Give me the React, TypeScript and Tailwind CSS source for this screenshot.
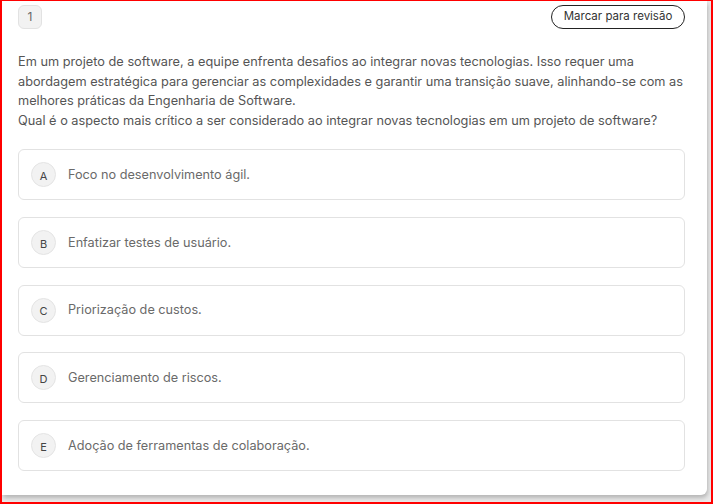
const options = [
  { letter: "A", text: "Foco no desenvolvimento ágil." },
  { letter: "B", text: "Enfatizar testes de usuário." },
  { letter: "C", text: "Priorização de custos." },
  { letter: "D", text: "Gerenciamento de riscos." },
  { letter: "E", text: "Adoção de ferramentas de colaboração." },
];

export default function App() {
  return (
    <div className="w-[713px] h-[504px] border-2 border-t border-[#ff0000] bg-[#e9e9e9] font-['Inter',sans-serif] overflow-hidden">
      <div className="w-[705px] h-[494px] bg-white rounded-br-md shadow-[1px_3px_4px_rgba(0,0,0,0.22)] px-4 pt-1">
        {/* Header */}
        <div className="flex items-center justify-between">
          <div className="w-6 h-6 flex items-center justify-center rounded-md bg-[#f2f2f2] border border-[#e2e2e2] text-[12px] text-[#666]">
            1
          </div>
          <button className="h-6 w-[134px] rounded-full border border-[#222] text-[11.5px] text-[#333] mr-[6px]">
            Marcar para revisão
          </button>
        </div>

        {/* Enunciado */}
        <p className="mt-[23px] text-[12.75px] leading-[19.5px] text-[#555]">
          Em um projeto de software, a equipe enfrenta desafios ao integrar novas tecnologias. Isso requer uma
          <br />
          abordagem estratégica para gerenciar as complexidades e garantir uma transição suave, alinhando-se com as
          <br />
          melhores práticas da Engenharia de Software.
          <br />
          Qual é o aspecto mais crítico a ser considerado ao integrar novas tecnologias em um projeto de software?
        </p>

        {/* Alternativas */}
        <div className="mt-[19px] flex flex-col gap-[16.75px] pr-[6px]">
          {options.map((o) => (
            <div
              key={o.letter}
              className="h-[51px] flex items-center gap-[12px] px-3 rounded-md border border-[#e2e2e2] bg-white"
            >
              <span className="w-[25px] h-[25px] flex items-center justify-center rounded-full bg-[#f2f2f2] border border-[#e4e4e4] text-[11px] text-[#444] pt-[3px]">
                {o.letter}
              </span>
              <span className="text-[12.7px] text-[#6a6a6a]">{o.text}</span>
            </div>
          ))}
        </div>
      </div>
    </div>
  );
}
